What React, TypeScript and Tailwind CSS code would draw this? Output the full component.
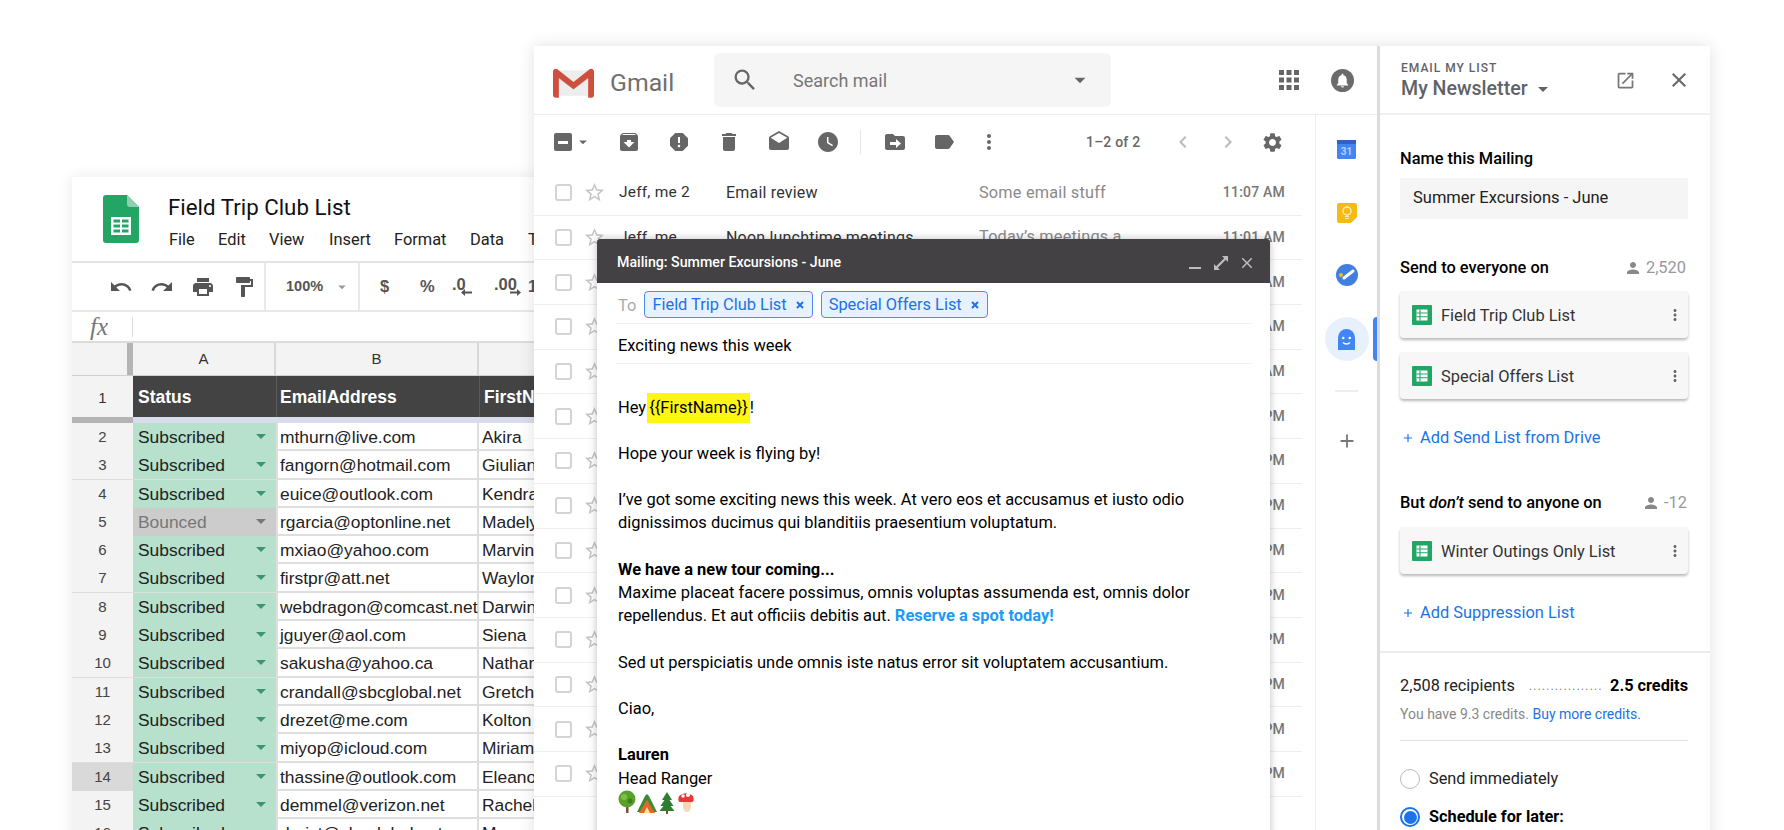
import {
  MdAdd,
  MdApps,
  MdArchive,
  MdArrowDropDown,
  MdChevronLeft,
  MdChevronRight,
  MdClose,
  MdDelete,
  MdDrafts,
  MdFormatPaint,
  MdLabel,
  MdMoreVert,
  MdNotifications,
  MdOpenInNew,
  MdPerson,
  MdPrint,
  MdRedo,
  MdReport,
  MdSearch,
  MdSettings,
  MdStarBorder,
  MdUndo,
  MdWatchLater,
} from "react-icons/md";

const SHEET_ROWS = [
  ["2", "Subscribed", "mthurn@live.com", "Akira"],
  ["3", "Subscribed", "fangorn@hotmail.com", "Giuliana"],
  ["4", "Subscribed", "euice@outlook.com", "Kendra"],
  ["5", "Bounced", "rgarcia@optonline.net", "Madelyn"],
  ["6", "Subscribed", "mxiao@yahoo.com", "Marvin"],
  ["7", "Subscribed", "firstpr@att.net", "Waylon"],
  ["8", "Subscribed", "webdragon@comcast.net", "Darwin"],
  ["9", "Subscribed", "jguyer@aol.com", "Siena"],
  ["10", "Subscribed", "sakusha@yahoo.ca", "Nathan"],
  ["11", "Subscribed", "crandall@sbcglobal.net", "Gretchen"],
  ["12", "Subscribed", "drezet@me.com", "Kolton"],
  ["13", "Subscribed", "miyop@icloud.com", "Miriam"],
  ["14", "Subscribed", "thassine@outlook.com", "Eleanor"],
  ["15", "Subscribed", "demmel@verizon.net", "Rachel"],
  ["16", "Subscribed", "durist@sbcglobal.net", "Mason"],
];

const MENU = [
  ["File", "w-[49px]"],
  ["Edit", "w-[51px]"],
  ["View", "w-[60px]"],
  ["Insert", "w-[65px]"],
  ["Format", "w-[76px]"],
  ["Data", "w-[58px]"],
  ["Tools", "w-[50px]"],
];

const MAIL_TIMES = [
  "11:07 AM",
  "11:01 AM",
  "10:44 AM",
  "10:12 AM",
  "9:30 AM",
  "5:48 PM",
  "4:22 PM",
  "3:15 PM",
  "2:40 PM",
  "1:36 PM",
  "1:02 PM",
  "12:51 PM",
  "12:20 PM",
  "12:05 PM",
];

function SheetsLogo() {
  return (
    <svg width="36" height="48" viewBox="0 0 36 48">
      <path d="M3 0h21l12 12v33a3 3 0 0 1-3 3H3a3 3 0 0 1-3-3V3a3 3 0 0 1 3-3z" fill="#23a566" />
      <path d="M24 0l12 12H27a3 3 0 0 1-3-3z" fill="#8ed1b1" />
      <path d="M8 22h20v18H8z" fill="#fff" />
      <path d="M10.5 24.5h6.5v3h-6.5zM19 24.5h6.5v3H19zM10.5 29.5h6.5v3h-6.5zM19 29.5h6.5v3H19zM10.5 34.5h6.5v3h-6.5zM19 34.5h6.5v3H19z" fill="#23a566" />
    </svg>
  );
}

function DecimalArrow({ flip }: { flip?: boolean }) {
  return (
    <svg width="11" height="7" viewBox="0 0 11 7" fill="currentColor" className={flip ? "absolute left-[16px] top-[17px] rotate-180" : "absolute left-[9px] top-[17px]"}>
      <path d="M0 3.500L4 0v2.500h7v2H4V7z" />
    </svg>
  );
}

function SheetsWindow() {
  return (
    <div className="absolute left-[72px] top-[177px] h-[700px] w-[520px] overflow-hidden bg-white font-['Roboto',sans-serif] text-[#222] shadow-[0_0_14px_rgba(0,0,0,0.09)]">
      <div className="flex h-[86px] border-b-2 border-[#e4e4e4]">
        <div className="ml-[31px] mt-[18px] w-[65px] shrink-0">
          <SheetsLogo />
        </div>
        <div>
          <div className="mt-[15px] text-[22.3px] leading-[30px] text-[#111]">Field Trip Club List</div>
          <div className="ml-px mt-[6px] flex text-[16.4px] leading-[24px]">
            {MENU.map(([label, width]) => (
              <span key={label} className={width}>{label}</span>
            ))}
          </div>
        </div>
      </div>
      <div className="flex h-[49px] items-center border-b-2 border-[#e8e8e8] text-[#555]">
        <div className="flex h-full w-[194px] items-center gap-[17px] border-r-2 border-[#e8e8e8] pl-[37px]">
          <MdUndo size={24} />
          <MdRedo size={24} />
          <MdPrint size={24} />
          <MdFormatPaint size={24} />
        </div>
        <div className="flex h-full w-[94px] items-center border-r-2 border-[#e8e8e8] pl-[20px] font-['Liberation_Sans',sans-serif] text-[14.500px] font-bold">
          <span>100%</span>
          <MdArrowDropDown size={18} className="ml-[10px] text-[#999]" />
        </div>
        <div className="flex items-center font-['Liberation_Sans',sans-serif] text-[16.500px] font-bold">
          <span className="ml-[20px] w-[40px]">$</span>
          <span className="w-[32px]">%</span>
          <span className="relative w-[42px] pb-[4px]">
            .0
            <DecimalArrow />
          </span>
          <span className="relative w-[34px] pb-[4px]">
            .00
            <DecimalArrow flip />
          </span>
          <span>123</span>
        </div>
      </div>
      <div className="flex h-[31px] items-center border-b-2 border-[#dcdcdc]">
        <span className="ml-[18px] w-[42px] font-['Liberation_Serif',serif] text-[25px] italic leading-none text-[#777]">fx</span>
        <span className="h-[20px] w-px bg-[#ddd]" />
      </div>
      <div className="grid h-[32px] grid-cols-[61px_143px_203px_113px] bg-[#f3f3f3] font-['Liberation_Sans',sans-serif] text-[15px] leading-[31px] text-[#333]">
        <div className="border-r-[6px] border-[#b4b4b4]" />
        <div className="border-r-2 border-[#d8d8d8] text-center">A</div>
        <div className="border-r-2 border-[#d8d8d8] text-center">B</div>
        <div />
      </div>
      <div className="grid h-[42px] grid-cols-[61px_143px_203px_113px] border-t border-[#d0d0d0] font-['Liberation_Sans',sans-serif] text-[17.5px] font-bold leading-[43px] text-white">
        <div className="bg-[#f3f3f3] text-center text-[15px] font-normal text-[#333]">1</div>
        <div className="bg-[#434343] pl-[5px]">Status</div>
        <div className="border-l border-[#5a5a5a] bg-[#434343] pl-[3px]">EmailAddress</div>
        <div className="border-l border-[#5a5a5a] bg-[#434343] pl-[4px]">FirstName</div>
      </div>
      <div className="grid h-[6px] grid-cols-[61px_1fr]">
        <div className="bg-[#b4b4b4]" />
        <div className="bg-[#d9dcea]" />
      </div>
      {SHEET_ROWS.map(([row, status, email, name]) => {
        const bounced = status === "Bounced";
        return (
          <div key={row} className="grid h-[28.3px] grid-cols-[61px_143px_203px_113px] border-b-2 border-[#dedede] font-['Liberation_Sans',sans-serif] text-[17.4px] leading-[28px] text-[#222]">
            <div className={`text-center text-[15px] text-[#444] ${row === "14" ? "bg-[#d9d9d9]" : "bg-[#f3f3f3]"}`}>{row}</div>
            <div className={`flex justify-between pl-[5px] pr-[3px] ${bounced ? "bg-[#cccccc] text-[#777]" : "bg-[#b7e1cd]"}`}>
              <span>{status}</span>
              <MdArrowDropDown size={24} className={`mt-[1px] ${bounced ? "text-[#777]" : "text-[#3a9570]"}`} />
            </div>
            <div className="border-x-2 border-[#dedede] pl-[2px] whitespace-nowrap">{email}</div>
            <div className="pl-[3px] whitespace-nowrap">{name}</div>
          </div>
        );
      })}
    </div>
  );
}

function GmailLogo() {
  return (
    <svg width="41" height="30" viewBox="0 0 42 30">
      <path d="M2 2h38v26H2z" fill="#ededed" />
      <path d="M2 2l19 15L40 2v6L21 22 2 8z" fill="#d9d9d9" />
      <path d="M0 3.500C0 1 2.500 -.5 4.500 1L21 14 37.500 1C39.500 -.5 42 1 42 3.500V27a3 3 0 0 1-3 3h-3V10L21 21.500 6 10v20H3a3 3 0 0 1-3-3z" fill="#cf4f3e" />
    </svg>
  );
}

function MoveToIcon() {
  return (
    <svg width="24" height="24" viewBox="0 0 24 24" fill="currentColor">
      <path d="M10 4H4a2 2 0 0 0-2 2v12a2 2 0 0 0 2 2h16a2 2 0 0 0 2-2V8a2 2 0 0 0-2-2h-8zm3 5l5 4.500-5 4.500v-3H7V12h6z" />
    </svg>
  );
}

function CalendarIcon() {
  return (
    <svg width="19" height="19" viewBox="0 0 19 19">
      <rect x="0" y="0" width="19" height="19" rx="1.500" fill="#4285f4" />
      <rect x="0" y="0" width="19" height="4" fill="#2f62c4" />
      <text x="9.500" y="15" textAnchor="middle" fontSize="10" fontWeight="700" fill="#b9d0fb" fontFamily="Roboto, sans-serif">31</text>
    </svg>
  );
}

function KeepIcon() {
  return (
    <svg width="20" height="20" viewBox="0 0 20 20">
      <path d="M2 0h16a2 2 0 0 1 2 2v12l-6 6H2a2 2 0 0 1-2-2V2a2 2 0 0 1 2-2z" fill="#f5ba15" />
      <circle cx="10" cy="8" r="4" fill="none" stroke="#fff3c4" strokeWidth="1.300" />
      <path d="M8 13.500h4M8.500 15.500h3" stroke="#fff3c4" strokeWidth="1.200" />
    </svg>
  );
}

function TasksIcon() {
  return (
    <svg width="22" height="22" viewBox="0 0 22 22">
      <circle cx="11" cy="11" r="11" fill="#3f7fe0" />
      <path d="M8 14l9-7" stroke="#fff" strokeWidth="3" strokeLinecap="round" />
      <circle cx="5" cy="11" r="2" fill="#f5ba15" />
    </svg>
  );
}

function GhostIcon() {
  return (
    <svg width="17" height="21" viewBox="0 0 17 21">
      <path d="M0 8.500a8.500 8.500 0 0 1 17 0V21H0z" fill="#4285f4" />
      <circle cx="5.200" cy="9" r="1.300" fill="#fff" />
      <circle cx="11.800" cy="9" r="1.300" fill="#fff" />
      <path d="M5 13.500c1.800 2 5.200 2 7 0" stroke="#fff" strokeWidth="1.400" fill="none" />
    </svg>
  );
}

function GmailWindow() {
  return (
    <div className="flex h-[784px] min-w-0 flex-1 flex-col border-r-[3px] border-[#dcdcdc] font-['Roboto',sans-serif]">
      <div className="flex h-[69px] shrink-0 items-center border-b border-[#eeeeee]">
        <div className="ml-[19px] mt-[5px] w-[42px]">
          <GmailLogo />
        </div>
        <span className="ml-[15px] mt-[6px] w-[104px] text-[24.8px] text-[#6f6f6f]">Gmail</span>
        <div className="flex h-[54px] w-[397px] items-center rounded-[6px] bg-[#f5f5f5] text-[#666]">
          <MdSearch size={28} className="ml-[17px]" />
          <span className="ml-[34px] flex-1 text-[18px] text-[#777]">Search mail</span>
          <MdArrowDropDown size={26} className="mr-[18px]" />
        </div>
        <MdApps size={30} className="ml-[163px] text-[#666]" />
        <div className="ml-[27px] flex h-[23px] w-[23px] items-center justify-center rounded-full bg-[#6b6b6b]">
          <MdNotifications size={17} className="text-white" />
        </div>
      </div>
      <div className="flex min-h-0 flex-1">
        <div className="min-w-0 flex-1">
          <div className="flex h-[56px] items-center pb-[2px] text-[#666]">
            <div className="ml-[20px] flex h-[18px] w-[18px] items-center justify-center rounded-[2px] bg-[#666]">
              <span className="h-[3px] w-[10px] bg-white" />
            </div>
            <MdArrowDropDown size={18} className="ml-[2px]" />
            <MdArchive size={24} className="ml-[25px]" />
            <MdReport size={24} className="ml-[26px]" />
            <MdDelete size={24} className="ml-[26px]" />
            <MdDrafts size={24} className="ml-[26px]" />
            <MdWatchLater size={24} className="ml-[25px]" />
            <span className="ml-[20px] h-[24px] w-px bg-[#e5e5e5]" />
            <div className="ml-[22px]"><MoveToIcon /></div>
            <MdLabel size={24} className="ml-[25px]" />
            <MdMoreVert size={24} className="ml-[21px]" />
            <span className="ml-[85px] w-[60px] text-[14px] font-medium tracking-[0.2px]">1–2 of 2</span>
            <MdChevronLeft size={24} className="ml-[25px] text-[#bbb]" />
            <MdChevronRight size={24} className="ml-[21px] text-[#bbb]" />
            <MdSettings size={23} className="ml-[21px]" />
          </div>
          {MAIL_TIMES.map((time, i) => (
            <div key={i} className="flex h-[44.7px] w-[768px] items-center border-b border-[#efefef] text-[15.5px] tracking-[0.2px] text-[#333]">
              <span className="ml-[21px] h-[17px] w-[17px] rounded-[3px] border-2 border-[#d4d4d4]" />
              <MdStarBorder size={23} className="ml-[11px] text-[#c6c6c6]" />
              <span className="ml-[13px] w-[107px]">{i === 0 ? "Jeff, me 2" : i === 1 ? "Jeff, me" : ""}</span>
              <span className="w-[253px] text-[16px]">{i === 0 ? "Email review" : i === 1 ? "Noon lunchtime meetings" : ""}</span>
              <span className="flex-1 text-[16.3px] text-[#8a8a8a]">{i === 0 ? "Some email stuff" : i === 1 ? "Today’s meetings a" : ""}</span>
              <span className="mr-[17px] text-[14px] font-medium text-[#777]">{time}</span>
            </div>
          ))}
        </div>
        <div className="relative flex w-[62px] shrink-0 flex-col items-center border-l border-[#eeeeee]">
          <div className="mt-[25px]"><CalendarIcon /></div>
          <div className="mt-[44px]"><KeepIcon /></div>
          <div className="mt-[41px]"><TasksIcon /></div>
          <div className="mt-[31px] flex h-[44px] w-[44px] items-center justify-center rounded-full bg-[#e8f0fe]">
            <GhostIcon />
          </div>
          <span className="absolute right-0 top-[202px] h-[44px] w-[4px] rounded-l-[4px] bg-[#4285f4]" />
          <span className="mt-[29px] h-[2px] w-[23px] bg-[#eeeeee]" />
          <MdAdd size={22} className="mt-[38px] text-[#777]" />
        </div>
      </div>
    </div>
  );
}

function ListTab({ children }: { children: React.ReactNode }) {
  return (
    <span className="flex h-[27px] items-center gap-[9px] rounded-[4px] border border-[#4a90f0] bg-[#e8f1fe] pl-[7px] pr-[8px] text-[16.4px] text-[#1a73e8]">
      {children}
      <svg width="8" height="8" viewBox="0 0 8 8" stroke="currentColor" strokeWidth="2">
        <path d="M1 1l6 6M7 1L1 7" />
      </svg>
    </span>
  );
}

function Emojis() {
  return (
    <svg width="76" height="24" viewBox="0 0 76 24">
      {/* tree */}
      <path d="M8 15h2.500v8H8z" fill="#7a5230" />
      <circle cx="9" cy="9" r="8.500" fill="#5aa02c" />
      <circle cx="6" cy="7" r="3" fill="#7cc243" />
      <circle cx="12" cy="11" r="2.500" fill="#447d20" />
      {/* tent */}
      <path d="M19 22l8-16 2-2 2 2 8 16z" fill="#3f8a36" />
      <path d="M21 23l8-13 8 13z" fill="#e4672a" />
      <path d="M26 23l3-6 3 6z" fill="#fbe2a0" />
      {/* fir */}
      <path d="M49 2l5 8h-2.500l4 6h-3l4 5h-15l4-5h-3l4-6H44z" fill="#2e7d32" />
      <path d="M48 20h2v4h-2z" fill="#7a5230" />
      {/* mushroom */}
      <path d="M62 6a9 7.500 0 0 1 14 0c1 3 1 6-1 6H63c-2 0-2-3-1-6z" fill="#e53935" transform="translate(-1 0)" />
      <circle cx="65" cy="6" r="1.700" fill="#fff" />
      <circle cx="70" cy="5" r="2" fill="#fff" />
      <path d="M65 12h8c.5 4 0 10-4 10s-4.500-6-4-10z" fill="#f2d8b8" />
    </svg>
  );
}

function ComposeWindow() {
  return (
    <div className="absolute left-[597px] top-[239px] h-[640px] w-[673px] bg-white font-['Roboto',sans-serif] text-[16.45px] leading-[23.2px] text-black shadow-[0_0_8px_rgba(0,0,0,0.25)]">
      <div className="flex h-[44px] items-center justify-between rounded-t-[3px] bg-[#434143] pl-[20px] pr-[14px] pt-[3px] text-[14.200px] font-medium text-white">
        <span>Mailing: Summer Excursions - June</span>
        <div className="flex items-center gap-[9px] text-[#bdbdbd]">
          <span className="mt-[10px] h-[2px] w-[12px] bg-[#bdbdbd]" />
          <svg width="16" height="16" viewBox="0 0 16 16" fill="currentColor" className="ml-[3px]">
            <path d="M9 1h6v6l-2.200-2.200-8 8L7 15H1V9l2.200 2.200 8-8z" />
          </svg>
          <MdClose size={18} />
        </div>
      </div>
      <div className="mx-[19px] flex h-[41px] items-center gap-[8px] border-b border-[#f0f0f0] pl-[2px] pt-[3px]">
        <span className="mt-[2px] text-[#aaa]">To</span>
        <ListTab>Field Trip Club List</ListTab>
        <ListTab>Special Offers List</ListTab>
      </div>
      <div className="mx-[19px] flex h-[40px] items-center border-b border-[#f0f0f0] pl-[2px] pt-[5px]">
        Exciting news this week
      </div>
      <div className="ml-[21px] mr-[19px] pt-[31.5px]">
        <p className="mb-[23.2px]">
          Hey <span className="-my-[4px] -ml-[3px] inline-block h-[30px] bg-[#fff614] pl-[2px] pr-[2px] pt-[3px]">{"{{FirstName}}"}</span>!
        </p>
        <p className="mb-[23.2px]">Hope your week is flying by!</p>
        <p className="mb-[23.2px]">
          I’ve got some exciting news this week. At vero eos et accusamus et iusto odio
          <br />
          dignissimos ducimus qui blanditiis praesentium voluptatum.
        </p>
        <p className="font-bold">We have a new tour coming...</p>
        <p className="mb-[23.2px]">
          Maxime placeat facere possimus, omnis voluptas assumenda est, omnis dolor
          <br />
          repellendus. Et aut officiis debitis aut.{" "}
          <span className="font-bold text-[#1a9bf7]">Reserve a spot today!</span>
        </p>
        <p className="mb-[23.2px]">Sed ut perspiciatis unde omnis iste natus error sit voluptatem accusantium.</p>
        <p className="mb-[23.2px]">Ciao,</p>
        <p className="font-bold">Lauren</p>
        <p>Head Ranger</p>
        <Emojis />
      </div>
    </div>
  );
}

function SheetGlyph() {
  return (
    <svg width="20" height="20" viewBox="0 0 20 20" className="shrink-0">
      <rect width="20" height="20" rx="1" fill="#23a566" />
      <path d="M4.500 4.500h11v11h-11z" fill="#fff" />
      <path d="M8 4.500v11M4.500 8h11M4.500 11.700h11" stroke="#23a566" strokeWidth="1.100" />
    </svg>
  );
}

function ListCard({ label, className }: { label: string; className: string }) {
  return (
    <div className={`flex h-[47px] items-center rounded-[4px] bg-[#f7f7f7] pl-[12px] pr-[4px] text-[16.4px] text-[#333] shadow-[0_2px_3px_rgba(0,0,0,0.28)] ${className}`}>
      <SheetGlyph />
      <span className="ml-[9px] flex-1 pt-[4px]">{label}</span>
      <MdMoreVert size={18} className="text-[#666]" />
    </div>
  );
}

function AddLink({ label, className }: { label: string; className: string }) {
  return (
    <div className={`flex items-center text-[16.4px] leading-[24px] text-[#1a73e8] ${className}`}>
      <MdAdd size={14} className="ml-[1px]" />
      <span className="ml-[5px]">{label}</span>
    </div>
  );
}

function Sidebar() {
  return (
    <div className="h-[784px] w-[330px] shrink-0 font-['Roboto',sans-serif] text-[#222]">
      <div className="flex h-[69px] border-b-2 border-[#f0f0f0] pl-[21px]">
        <div className="flex-1 pt-[15px] text-[#5f6368]">
          <div className="text-[12px] font-medium leading-[14px] tracking-[1px]">EMAIL MY LIST</div>
          <div className="mt-[2px] flex items-center text-[19.6px] font-medium leading-[22px]">
            My Newsletter
            <MdArrowDropDown size={24} className="ml-[3px]" />
          </div>
        </div>
        <MdOpenInNew size={21} className="mr-[31px] mt-[24px] text-[#777]" />
        <MdClose size={24} className="mr-[19px] mt-[22px] text-[#666]" />
      </div>
      <div className="px-[20px] pr-[22px]">
        <div className="mt-[32px] text-[16.4px] font-medium leading-[24px] text-black">Name this Mailing</div>
        <div className="mt-[7px] h-[41px] bg-[#f5f5f5] pl-[13px] text-[16.5px] leading-[40px]">Summer Excursions - June</div>
        <div className="mt-[36px] flex h-[24px] items-center pt-[2px] text-[16.4px]">
          <span className="flex-1 font-medium text-black">Send to everyone on</span>
          <MdPerson size={18} className="text-[#888]" />
          <span className="ml-[4px] mr-[2px] text-[#999]">2,520</span>
        </div>
        <ListCard label="Field Trip Club List" className="mt-[12px]" />
        <ListCard label="Special Offers List" className="mt-[14px]" />
        <AddLink label="Add Send List from Drive" className="mt-[27px]" />
        <div className="mt-[41px] flex h-[24px] items-center text-[16.4px]">
          <span className="flex-1 font-medium text-black">
            But <em>don’t</em> send to anyone on
          </span>
          <MdPerson size={18} className="text-[#888]" />
          <span className="ml-[4px] mr-[1px] text-[#999]">-12</span>
        </div>
        <ListCard label="Winter Outings Only List" className="mt-[12px]" />
        <AddLink label="Add Suppression List" className="mt-[27px]" />
      </div>
      <div className="mt-[26px] h-[2px] bg-[#ececec]" />
      <div className="px-[20px] pr-[22px]">
        <div className="mt-[21px] flex h-[24px] items-center text-[16.3px]">
          <span>2,508 recipients</span>
          <span className="ml-[14px] flex-1 font-['Liberation_Sans',sans-serif] text-[12px] tracking-[1px] text-[#888]">.................</span>
          <span className="font-bold text-black">2.5 credits</span>
        </div>
        <div className="mt-[6px] text-[14px] leading-[20px] text-[#888]">
          You have 9.3 credits. <span className="text-[#1a73e8]">Buy more credits.</span>
        </div>
        <div className="mt-[16px] h-px bg-[#e3e3e3]" />
        <label className="mt-[28px] flex h-[20px] items-center text-[16.3px]">
          <span className="h-[20px] w-[20px] rounded-full border border-[#bbb]" />
          <span className="ml-[9px]">Send immediately</span>
        </label>
        <label className="mt-[18px] flex h-[20px] items-center text-[16.3px]">
          <span className="flex h-[20px] w-[20px] items-center justify-center rounded-full border-2 border-[#1a73e8]">
            <span className="h-[13px] w-[13px] rounded-full bg-[#1a73e8]" />
          </span>
          <span className="ml-[9px] font-bold text-black">Schedule for later:</span>
        </label>
      </div>
    </div>
  );
}

export default function App() {
  return (
    <div className="relative h-[830px] w-[1784px] overflow-hidden bg-white">
      <SheetsWindow />
      <div className="absolute left-[534px] top-[46px] flex h-[830px] w-[1176px] bg-white shadow-[0_0_16px_rgba(0,0,0,0.12)]">
        <GmailWindow />
        <Sidebar />
      </div>
      <ComposeWindow />
    </div>
  );
}
